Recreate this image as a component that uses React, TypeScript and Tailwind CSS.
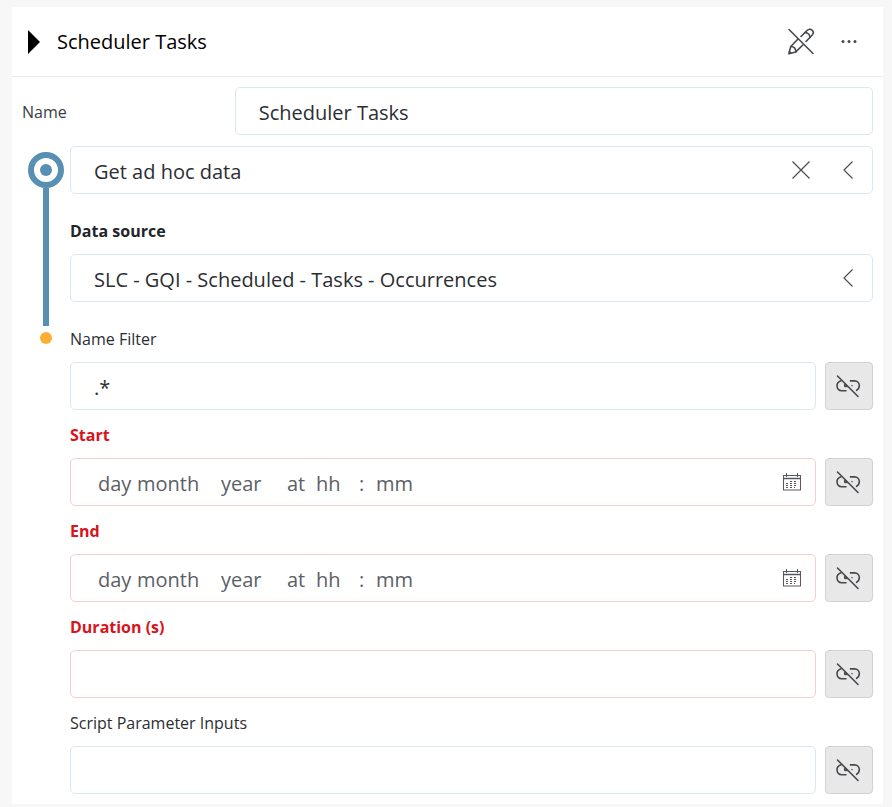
import React, { useId, useState } from "react";

function PencilOffIcon() {
  return (
    <svg width="28" height="28" viewBox="0 0 28 28" fill="none" stroke="#45484d" strokeWidth="1.6" strokeLinecap="round" strokeLinejoin="round" aria-hidden="true">
      <path d="M2 1.500 26 25.500" />
      <path d="M14 8.500 20 2.500c1.700-1.700 4-1.500 5.200-.3 1.300 1.300 1.400 3.500-.2 5.100L19 13.500" />
      <path d="M10.500 11.500 3.800 18.500 1.800 25.800l7-1.900 7-6.900" />
      <path d="M18 4.500c2.900.3 4.800 2.200 5.100 5" />
      <path d="M3.800 18.500c3-.1 5.200 2.100 5 5.400" />
      <path d="M2.400 23.600 4 25.200" />
    </svg>
  );
}

function UnlinkIcon() {
  return (
    <svg width="26" height="24" viewBox="1 0 26 24" fill="none" stroke="#45484d" strokeWidth="1.600" strokeLinecap="round" aria-hidden="true">
      <path d="M2.500 2 23 22.500" />
      <path d="M5.800 6.900c-2.300.6-3.800 2.300-3.800 4.900 0 2.900 2 4.900 4.700 4.900h4.300" />
      <path d="M9.500 10.500v2.200h3z" fill="#45484d" strokeWidth="1" />
      <path d="M15.500 6.900h4.100c2.700 0 4.700 1.900 4.700 4.700 0 2.200-1 3.800-2.700 4.700" />
      <path d="M16.500 11.700h.8" strokeWidth="1" />
    </svg>
  );
}

function CalendarIcon() {
  return (
    <svg width="20" height="18" viewBox="0 0 20 18" fill="none" stroke="#55585c" aria-hidden="true">
      <path d="M1.500 2v15M18.500 2v15M1 17h18" />
      <path d="M1 2.500h18" />
      <path d="M1 5.500h18" strokeWidth="1.500" />
      <path d="M4.500 0v4M15.500 0v4" />
      <path d="M8 8.500h8M4 10.500h12M4 12.500h12M4 14.500h9" strokeDasharray="2 2" />
    </svg>
  );
}

function ChevronIcon() {
  return (
    <svg width="12" height="20" viewBox="0 0 12 20" fill="none" stroke="#4b4e52" strokeWidth="1.200" aria-hidden="true">
      <path d="M10.500 1.500 2 10l8.500 8.500" />
    </svg>
  );
}

const box = "h-12 rounded-[5px] border bg-white";
const fieldText = "text-[20px] leading-6 text-[#2b2e33]";
const labelText = "text-[16px] leading-[26px]";

function Picker({ id, value, label, onClear }: { id: string; value: string; label?: string; onClear?: () => void }) {
  return (
    <div className={`${box} relative flex items-center border-[#dbe8ef]`}>
      <select id={id} aria-label={label} className={`${fieldText} h-full w-full appearance-none rounded-[5px] bg-transparent pl-[23px] pr-28 pt-[3px]`}>
        <option>{value}</option>
      </select>
      {onClear && (
        <button type="button" aria-label="Clear" onClick={onClear} className="absolute right-[61px] flex size-5 items-center justify-center">
          <svg width="20" height="20" viewBox="0 0 20 20" stroke="#4b4e52" strokeWidth="1.200" aria-hidden="true">
            <path d="M1.500 1.500l17 17M18.500 1.500l-17 17" />
          </svg>
        </button>
      )}
      <span className="pointer-events-none absolute right-[18px]">
        <ChevronIcon />
      </span>
    </div>
  );
}

function Row({ children }: { children: React.ReactNode }) {
  return (
    <div className="mt-[10px] flex gap-[9px]">
      {children}
      <button type="button" aria-label="Link to data" className="flex size-12 shrink-0 items-center justify-center rounded-[4px] border border-[#d2d2d2] bg-[#e8e8e8]">
        <UnlinkIcon />
      </button>
    </div>
  );
}

function TextField({ label, initial = "", invalid = false }: { label: string; initial?: string; invalid?: boolean }) {
  const id = useId();
  return (
    <div>
      <label htmlFor={id} className={`block ${labelText} ${invalid ? "font-bold text-[#d8141c]" : "text-[#2b2e33]"}`}>
        {label}
      </label>
      <Row>
        <input id={id} defaultValue={initial} className={`${box} ${fieldText} min-w-0 flex-1 px-[23px] pt-[3px] ${invalid ? "border-[#f6cfd0]" : "border-[#dbe8ef]"}`} />
      </Row>
    </div>
  );
}

function DateField({ label }: { label: string }) {
  const id = useId();
  const part = "bg-transparent p-0 placeholder:text-[#5c6065] placeholder:opacity-100";
  return (
    <div role="group" aria-labelledby={id}>
      <span id={id} className={`block ${labelText} font-bold text-[#d8141c]`}>
        {label}
      </span>
      <Row>
        <div className={`${box} flex min-w-0 flex-1 items-center border-[#f6cfd0] pl-[27px] pr-[11px] text-[20px] leading-6 text-[#5c6065]`}>
          <div className="flex flex-1 items-center pt-[3px]">
            <input aria-label={`${label} day`} placeholder="day" className={`${part} w-[39px]`} />
            <input aria-label={`${label} month`} placeholder="month" className={`${part} w-[84px]`} />
            <input aria-label={`${label} year`} placeholder="year" className={`${part} w-[66px]`} />
            <span className="w-[29px]">at</span>
            <input aria-label={`${label} hours`} placeholder="hh" className={`${part} w-[43px]`} />
            <span className="w-[17px]">:</span>
            <input aria-label={`${label} minutes`} placeholder="mm" className={`${part} w-10`} />
          </div>
          <button type="button" aria-label={`Choose ${label} date`} className="flex size-6 shrink-0 items-center justify-center">
            <CalendarIcon />
          </button>
        </div>
      </Row>
    </div>
  );
}

export default function App() {
  const [source, setSource] = useState("Get ad hoc data");
  return (
    <main className="min-h-screen bg-[#f7f7f7] pb-[3px] pl-3 pr-[9px] pt-[7px] font-['Open_Sans','Noto_Sans',sans-serif]">
      <section className="bg-white">
        <header className="flex h-[70px] items-center border-b border-[#e8ecef] pl-[15px] pr-[25px]">
          <button type="button" aria-label="Expand" className="mr-4 flex">
            <svg width="14" height="24" viewBox="0 0 14 24" aria-hidden="true">
              <path d="M1 0 13 12 1 24z" fill="#000" />
            </svg>
          </button>
          <h1 className="flex-1 text-[20px] leading-6 text-black">Scheduler Tasks</h1>
          <button type="button" aria-label="Stop editing" className="mr-[25px]">
            <PencilOffIcon />
          </button>
          <button type="button" aria-label="More">
            <svg width="18" height="6" viewBox="0 0 18 6" fill="#45484d" aria-hidden="true">
              <circle cx="3" cy="2.500" r="1.500" />
              <circle cx="9" cy="2.500" r="1.500" />
              <circle cx="15" cy="2.500" r="1.500" />
            </svg>
          </button>
        </header>

        <form className="p-[10px]">
          <div className="flex items-center">
            <label htmlFor="query-name" className={`w-1/4 pt-[2px] ${labelText} text-[#3a3d42]`}>
              Name
            </label>
            <input id="query-name" defaultValue="Scheduler Tasks" className={`${box} ${fieldText} min-w-0 flex-1 border-[#dbe8ef] px-[23px] pt-[3px]`} />
          </div>

          <div className="mt-[11px] flex gap-[6px] pl-[6px]">
            <div className="flex w-9 shrink-0 flex-col items-center pt-[6px]">
              <span className="flex size-9 items-center justify-center rounded-full border-[6px] border-[#5890b4]">
                <span className="size-3 rounded-full bg-[#5890b4]" />
              </span>
              <span className="w-[6px] flex-1 bg-[#5890b4]" />
            </div>
            <div className="min-w-0 flex-1 pb-6">
              <Picker key={source} id="operator" label="Operator" value={source} onClear={() => setSource("")} />
              <label htmlFor="data-source" className={`mb-[10px] mt-6 block ${labelText} font-bold text-[#212429]`}>
                Data source
              </label>
              <Picker id="data-source" value="SLC - GQI - Scheduled - Tasks - Occurrences" />
            </div>
          </div>

          <div className="flex gap-[6px] pl-[6px]">
            <div className="flex w-9 shrink-0 justify-center pt-[6px]">
              <span className="size-3 rounded-full bg-[#ffae35]" />
            </div>
            <div className="flex min-w-0 flex-1 flex-col gap-3">
              <TextField label="Name Filter" initial=".*" />
              <DateField label="Start" />
              <DateField label="End" />
              <TextField label="Duration (s)" invalid />
              <TextField label="Script Parameter Inputs" />
            </div>
          </div>
        </form>
      </section>
    </main>
  );
}
